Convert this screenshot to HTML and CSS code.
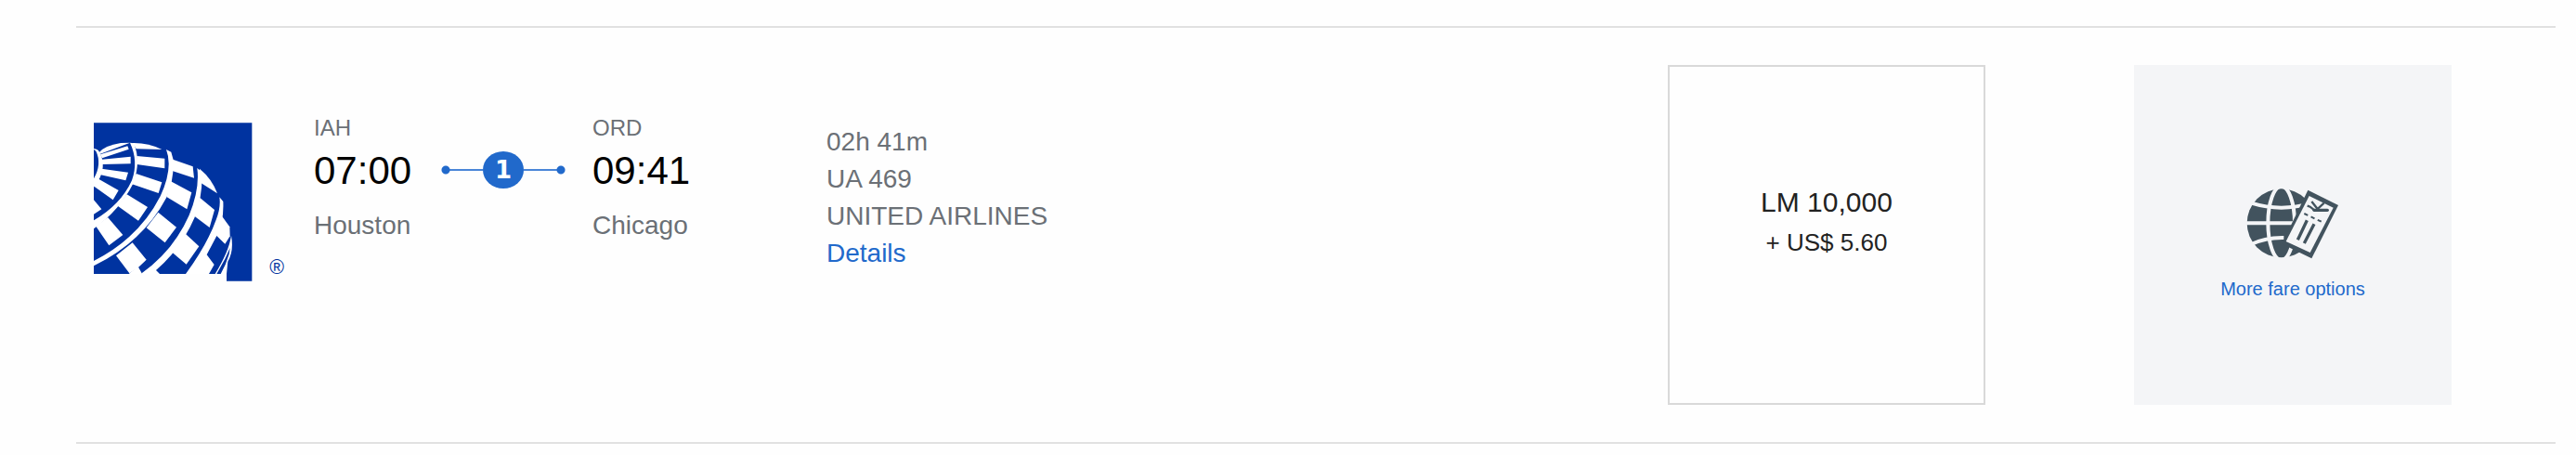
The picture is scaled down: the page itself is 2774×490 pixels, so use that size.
FILE: index.html
```html
<!DOCTYPE html>
<html lang="en">
<head>
    <meta charset="UTF-8">
    <meta name="viewport" content="width=device-width, initial-scale=1.0">
    <title>Flight Results</title>
    <link rel="stylesheet" href="styles.css">
</head>
<body>
    <main class="flight">
        <div class="airline">
            <svg class="airline-logo" viewBox="63 65 618 513" role="img" aria-label="United Airlines">
                <path fill="#0033a0" d="M63 66H574V577H492V554H63Z"/>
                <g fill="#fff">
                    <!-- rings -->
                    <path d="M63 149Q73 150 78 155Q104 195 83 243L63 274V246Q90 198 70 157L63 152Z"/>
                    <path d="M180 130L192 132Q217 190 190 262Q148 346 63 408V381Q150 331 186 252Q208 190 180 130Z"/>
                    <path d="M297 152L313 160L320 186Q322 255 297 309Q222 450 63 528V512Q210 437 278 303Q320 212 297 152Z"/>
                    <path d="M397 212L412 225Q416 300 389 371Q347 470 264 542L276 554H215Q320 480 371 364Q406 280 397 212Z"/>
                    <path d="M469 306L481 320Q484 385 460 431L428 492L452 524L435 554H360Q430 458 458 379Q474 340 469 306Z"/>
                    <path d="M507 430Q516 480 496 514L492 554H473Q490 524 500 490L503 470L487 505L460 554H455Q500 480 507 430Z"/>
                    <!-- squares from the pole outwards -->
                    <path d="M80 162Q98 139 150 131L180 130L140 145L84 166Z"/>
                    <path d="M84 168L172 141L176 151L90 180Z"/>
                    <path d="M90 184L182 175V198L90 200Z"/>
                    <path d="M88 214L174 226L166 252L82 233Z"/>
                    <path d="M76 246L143 284L125 315L64 271Z"/>
                    <path d="M63 315L88 345L63 361Z"/>
                    <path d="M188 131Q240 130 283 152L200 150Z"/>
                    <path d="M202 173L292 181V213L202 200Z"/>
                    <path d="M200 230L283 258L272 293L184 263Z"/>
                    <path d="M170 297L237 338L207 382L140 334Z"/>
                    <path d="M108 371L157 428L112 462L70 400Z"/>
                    <path d="M314 183L383 207L387 244L314 220Z"/>
                    <path d="M312 255L379 291L364 345L298 305Z"/>
                    <path d="M271 355L330 403L293 453L233 405Z"/>
                    <path d="M188 453L233 508L206 534L178 552L135 495Z"/>
                    <path d="M178 552L206 530L218 552V554H178Z"/>
                    <path d="M405 214Q445 247 462 294L408 259Z"/>
                    <path d="M406 308L453 347L437 404L386 366Z"/>
                    <path d="M360 425L403 465L362 523L316 484Z"/>
                    <path d="M477 367L502 402L503 432L487 457L457 428Z"/>
                </g>
                <text class="airline-mark" x="631" y="555">®</text>
            </svg>
        </div>

        <div class="trip">
            <div class="stop departure">
                <div class="airport">IAH</div>
                <div class="time">07:00</div>
                <div class="city">Houston</div>
            </div>
            <div class="route">
                <span class="route-count">1</span>
            </div>
            <div class="stop arrival">
                <div class="airport">ORD</div>
                <div class="time">09:41</div>
                <div class="city">Chicago</div>
            </div>
        </div>

        <div class="info">
            <div>02h 41m</div>
            <div>UA 469</div>
            <div>UNITED AIRLINES</div>
            <a href="#details">Details</a>
        </div>

        <div class="fare">
            <button type="button" class="fare-box fare-price">
                <span class="miles">LM 10,000</span>
                <span class="taxes">+ US$ 5.60</span>
            </button>
        </div>

        <div class="fare">
            <button type="button" class="fare-box fare-more">
                <svg class="fare-icon" viewBox="117 72 300 228" aria-hidden="true">
                    <circle cx="230" cy="184" r="111" fill="#42535e"/>
                    <g fill="none" stroke="#f4f5f7" stroke-width="12">
                        <ellipse cx="230" cy="184" rx="43" ry="119"/>
                        <path d="M117 184H270M133 119Q230 149 327 119M133 252Q180 230 238 231"/>
                    </g>
                    <path fill="#42535e" d="M316 77L414 126L328 298L232 251Z"/>
                    <path fill="#f4f5f7" d="M320 96L398 134L323 279L245 243Z"/>
                    <g fill="none" stroke="#42535e">
                        <path stroke-width="10" d="M313 175L283 238M336 187L304 249"/>
                        <path stroke-width="6" stroke-dasharray="13 11" d="M304 153L361 180"/>
                        <path stroke-width="10" stroke-linecap="round" d="M336 142H379"/>
                        <path stroke-width="7" d="M328 114L347 138L368 119M314 128L323 131L338 143"/>
                    </g>
                </svg>
                <span class="fare-link">More fare options</span>
            </button>
        </div>
    </main>
</body>
</html>
```
FILE: styles.css
```css
body {
    font-family: "Liberation Sans", Arial, sans-serif;
    background-color: #fefefe;
    color: #6b7076;
    margin: 28px 22px 0 82px;
}

.flight {
    display: flex;
    align-items: flex-start;
    padding: 40px 32px 40px 19px;
    border-top: 2px solid #e1e1e1;
    border-bottom: 2px solid #e1e1e1;
}

.airline {
    flex: 0 0 237px;
    padding-top: 62px;
}

.airline-logo {
    display: block;
    width: 206px;
}

.airline-mark {
    font-size: 64px;
    fill: #0033a0;
}

.trip {
    display: flex;
    padding-top: 52px;
}

.departure {
    width: 137px;
}

.arrival {
    width: 252px;
}

.airport {
    font-size: 24px;
    line-height: 32px;
}

.time {
    font-size: 42px;
    line-height: 60px;
    color: #000;
}

.city {
    font-size: 28px;
    line-height: 58px;
}

/* dot - line - number - line - dot */
.route {
    display: flex;
    align-items: center;
    width: 134px;
    height: 60px;
    margin: 31px 29px 0 0;
}

.route::before,
.route::after {
    content: "";
    flex: 1;
    height: 10px;
    background: radial-gradient(circle at 5px 5px, #2169cb 4px, transparent 5px),
        linear-gradient(#4a86d8, #4a86d8) 5px 4px / 100% 2px no-repeat;
}

.route::after {
    transform: scaleX(-1);
}

.route-count {
    width: 44px;
    border-radius: 50%;
    background-color: #2169cb;
    color: #fff;
    font: bold 26px/40px "DejaVu Sans", sans-serif;
    text-align: center;
}

.info {
    flex: 1;
    padding-top: 63px;
    font-size: 28px;
    line-height: 40px;
}

.info a {
    color: #2169cb;
    text-decoration: none;
}

.fare {
    flex: 0 1 502px;
    display: flex;
    justify-content: center;
}

.fare-box {
    display: flex;
    flex-direction: column;
    align-items: center;
    justify-content: center;
    box-sizing: border-box;
    width: 342px;
    min-height: 366px;
    border: 0;
    font-family: inherit;
    cursor: pointer;
}

.fare-price {
    padding: 0 0 28px;
    border: 2px solid #d9d9d9;
    background-color: #fefefe;
    color: #222;
}

.miles {
    font-size: 30px;
    line-height: 44px;
}

.taxes {
    font-size: 26px;
    line-height: 42px;
}

.fare-more {
    gap: 18px;
    padding: 22px 0 0;
    background-color: #f4f5f7;
}

.fare-icon {
    width: 100px;
}

.fare-link {
    font-size: 20px;
    line-height: 28px;
    color: #2169cb;
}
```
